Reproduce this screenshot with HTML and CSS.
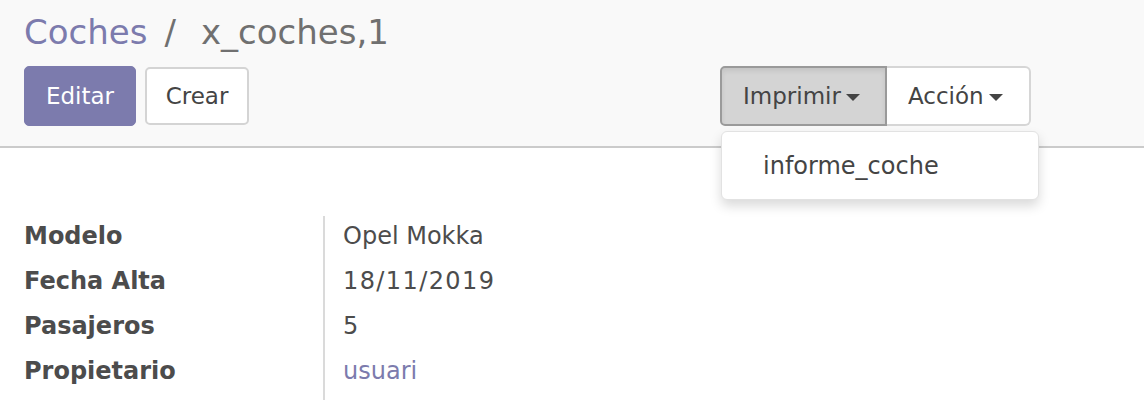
FILE: index.html
```html
<!DOCTYPE html>
<html lang="es">
<head>
<meta charset="utf-8">
<title>Coches / x_coches,1</title>
<link rel="stylesheet" href="styles.css">
</head>
<body>
<header class="control-panel">
  <ol class="breadcrumb">
    <li class="crumb link">Coches</li>
    <li class="sep">/</li>
    <li class="crumb active">x_coches,1</li>
  </ol>
  <div class="toolbar">
    <div class="main-buttons">
      <button class="btn btn-primary">Editar</button>
      <button class="btn btn-secondary">Crear</button>
    </div>
    <div class="btn-group">
      <button class="btn btn-group-item pressed">Imprimir<span class="caret"></span></button>
      <button class="btn btn-group-item last">Acción<span class="caret"></span></button>
      <div class="dropdown-menu">
        <div class="dropdown-item">informe_coche</div>
      </div>
    </div>
  </div>
</header>
<main class="sheet">
  <div class="fields">
    <div class="label">Modelo</div><div class="value">Opel Mokka</div>
    <div class="label">Fecha Alta</div><div class="value date">18/11/2019</div>
    <div class="label">Pasajeros</div><div class="value">5</div>
    <div class="label">Propietario</div><div class="value link">usuari</div>
  </div>
</main>
</body>
</html>
```

FILE: styles.css
```css
* { box-sizing: border-box; }

html, body {
  margin: 0;
  padding: 0;
  background: #ffffff;
  font-family: "DejaVu Sans", "Noto Sans", sans-serif;
  color: #4c4c4c;
}

.control-panel {
  background: #f9f9f9;
  border-bottom: 2px solid #cbcbcb;
  padding: 12px 0 20px 24px;
  height: 148px;
}

.breadcrumb {
  list-style: none;
  margin: 0;
  padding: 0;
  display: flex;
  font-size: 34px;
  line-height: 40px;
  height: 40px;
}

.crumb.link { color: #7c7bad; }
.crumb.active { color: #707070; }
.sep {
  color: #707070;
  margin: 0 25px 0 17px;
}

.toolbar {
  display: flex;
  align-items: flex-start;
  margin-top: 14px;
  padding-right: 113px;
}

.main-buttons {
  display: flex;
  gap: 9px;
}

.btn {
  font-family: inherit;
  font-size: 23px;
  height: 60px;
  border-radius: 5px;
  padding: 0 22px;
  display: flex;
  align-items: center;
  cursor: pointer;
}

.btn-primary {
  background: #7c7bad;
  border: 1px solid #7c7bad;
  color: #ffffff;
  padding: 0 22px;
  width: 112px;
  justify-content: center;
}

.btn-secondary {
  background: #ffffff;
  border: 2px solid #d4d4d4;
  color: #444444;
  width: 104px;
  justify-content: center;
  margin-top: 1px;
  height: 58px;
}

.btn-group {
  margin-left: auto;
  display: flex;
  position: relative;
}

.btn-group-item {
  background: #ffffff;
  border: 2px solid #d6d6d6;
  color: #444444;
  border-radius: 0;
}

.btn-group-item.pressed {
  background: #d4d4d4;
  border-color: #9a9a9a;
  border-radius: 5px 0 0 5px;
  box-shadow: inset 0 3px 5px rgba(0, 0, 0, 0.08);
  width: 167px;
  padding-left: 21px;
}

.btn-group-item.last {
  border-left: none;
  border-radius: 0 6px 6px 0;
  width: 144px;
  padding-left: 21px;
}

.caret {
  display: inline-block;
  width: 0;
  height: 0;
  margin-left: 5px;
  margin-top: 2px;
  border-left: 7px solid transparent;
  border-right: 7px solid transparent;
  border-top: 7px solid #444444;
}

.dropdown-menu {
  position: absolute;
  top: 65px;
  left: 1px;
  width: 318px;
  height: 69px;
  background: #ffffff;
  border: 1px solid #e2e2e2;
  border-radius: 6px;
  box-shadow: 0 6px 12px rgba(0, 0, 0, 0.15);
  display: flex;
  align-items: center;
}

.dropdown-item {
  font-size: 24px;
  color: #444444;
  padding-left: 41px;
}

.sheet {
  padding: 68px 0 0 24px;
}

.fields {
  display: grid;
  grid-template-columns: 299px 1fr;
  font-size: 24px;
  line-height: 41px;
}

.label {
  font-weight: bold;
  color: #4c4c4c;
  padding-bottom: 4px;
}

.value {
  border-left: 2px solid #dadada;
  padding-left: 18px;
  padding-bottom: 4px;
  color: #4c4c4c;
}

.value:last-child { padding-bottom: 8px; }

.value.date { letter-spacing: 1.4px; }
.value.link { color: #7c7bad; }
```
